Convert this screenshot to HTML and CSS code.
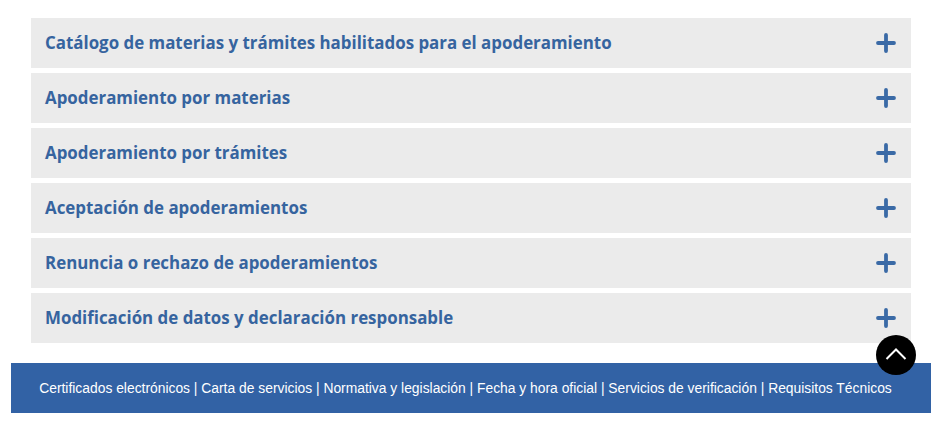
FILE: index.html
```html
<!DOCTYPE html>
<html lang="es">
<head>
<meta charset="utf-8">
<link rel="stylesheet" href="styles.css">
</head>
<body>
<main class="accordion">
  <div class="item"><span class="title">Catálogo de materias y trámites habilitados para el apoderamiento</span><svg class="plus" viewBox="0 0 20 20"><path d="M10 2V18M2 10H18"/></svg></div>
  <div class="item"><span class="title">Apoderamiento por materias</span><svg class="plus" viewBox="0 0 20 20"><path d="M10 2V18M2 10H18"/></svg></div>
  <div class="item"><span class="title">Apoderamiento por trámites</span><svg class="plus" viewBox="0 0 20 20"><path d="M10 2V18M2 10H18"/></svg></div>
  <div class="item"><span class="title">Aceptación de apoderamientos</span><svg class="plus" viewBox="0 0 20 20"><path d="M10 2V18M2 10H18"/></svg></div>
  <div class="item"><span class="title">Renuncia o rechazo de apoderamientos</span><svg class="plus" viewBox="0 0 20 20"><path d="M10 2V18M2 10H18"/></svg></div>
  <div class="item"><span class="title">Modificación de datos y declaración responsable</span><svg class="plus" viewBox="0 0 20 20"><path d="M10 2V18M2 10H18"/></svg></div>
</main>
<footer class="footer">
  <p class="links">Certificados electrónicos | Carta de servicios | Normativa y legislación | Fecha y hora oficial | Servicios de verificación | Requisitos Técnicos</p>
  <a class="top" href="#"><svg viewBox="0 0 40 40"><path d="M10.5 24L20 14.5L29.5 24"/></svg></a>
</footer>
</body>
</html>
```
FILE: styles.css
```css
html, body { margin: 0; padding: 0; background: #fff; }
body { width: 947px; }
.accordion {
  display: flex;
  flex-direction: column;
  gap: 5px;
  width: 880px;
  margin: 18px 0 0 31px;
}
.item {
  height: 50px;
  background: #ebebeb;
  display: flex;
  align-items: center;
  justify-content: space-between;
  padding: 0 15px 2px 14px;
  box-sizing: border-box;
}
.title {
  font-family: "Open Sans", sans-serif;
  font-weight: 700;
  font-size: 16.9px;
  color: #36649f;
}
.plus { width: 20px; height: 20px; margin-top: 2px; }
.plus path { stroke: #3a6aa6; stroke-width: 3.8; stroke-linecap: round; fill: none; }
.footer {
  position: relative;
  width: 920px;
  height: 50px;
  margin: 20px 0 0 11px;
  padding-right: 11px;
  box-sizing: border-box;
  background: #3262a5;
  display: flex;
  align-items: center;
  justify-content: center;
}
.links {
  margin: 0;
  font-family: "Liberation Sans", Arial, sans-serif;
  font-size: 13.85px;
  color: #fff;
}
.top {
  position: absolute;
  left: 865px;
  top: -28px;
  width: 40px;
  height: 40px;
  border-radius: 50%;
  background: #000;
  display: block;
}
.top svg { width: 40px; height: 40px; display: block; }
.top path { stroke: #fff; stroke-width: 2; fill: none; }
```
